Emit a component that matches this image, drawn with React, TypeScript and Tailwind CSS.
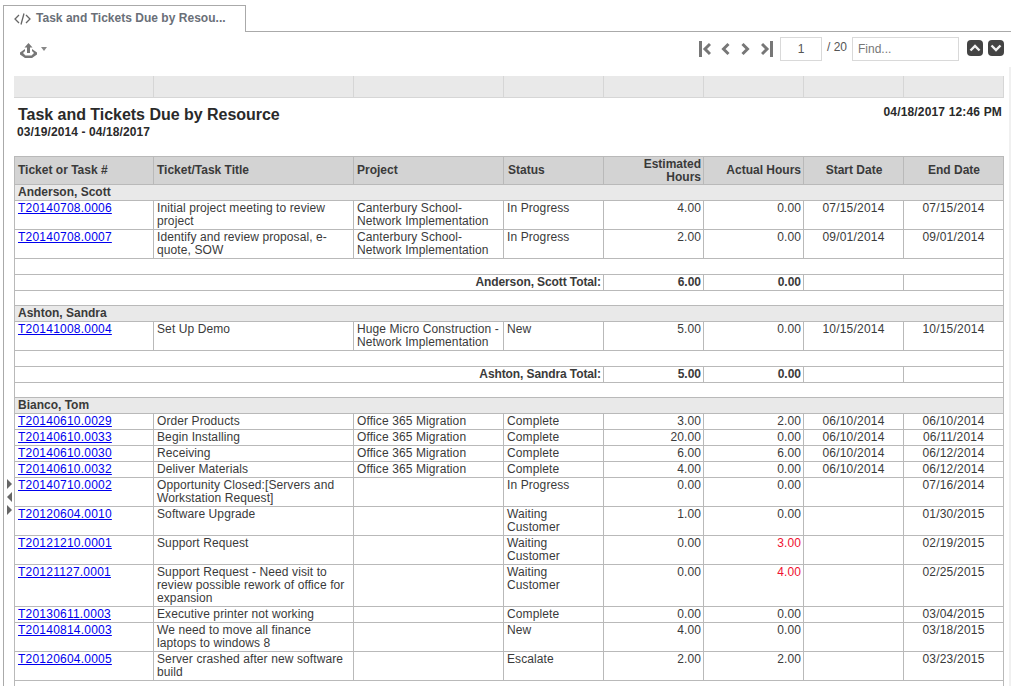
import React from "react";

const font = { fontFamily: '"Liberation Sans", Arial, sans-serif' };
type R = { id: string; title: string; project?: string; status: string; est: string; act: string; start?: string; end: string; h: string; red?: boolean };

const Colgroup = () => (
  <colgroup>
    <col className="w-[140px]" />
    <col className="w-[200px]" />
    <col className="w-[150px]" />
    <col className="w-[100px]" />
    <col className="w-[100px]" />
    <col className="w-[100px]" />
    <col className="w-[100px]" />
    <col className="w-[100px]" />
  </colgroup>
);

const td = "border-r border-b border-[#b9b9b9] align-top px-[2px] pt-[1px] pb-0";

function Row({ r }: { r: R }) {
  return (
    <tr className="tracking-[0.1px]">
      <td className={`${td} border-l pl-[3px] ${r.h}`}>
        <a href="#" className="text-[#0000ee] underline tracking-[0.22px]">{r.id}</a>
      </td>
      <td className={`${td} pl-[3px]`}>{r.title}</td>
      <td className={`${td} pl-[3px]`}>{r.project}</td>
      <td className={`${td} pl-[3px]`}>{r.status}</td>
      <td className={`${td} text-right`}>{r.est}</td>
      <td className={`${td} text-right ${r.red ? "text-[#f01030]" : ""}`}>{r.act}</td>
      <td className={`${td} text-center tracking-[0.2px]`}>{r.start}</td>
      <td className={`${td} text-center tracking-[0.2px]`}>{r.end}</td>
    </tr>
  );
}

function Group({ name }: { name: string }) {
  return (
    <tr>
      <td colSpan={8} className="h-[16px] bg-[#e9e9e9] border-l border-r border-b border-[#b9b9b9] pl-[3px] font-bold align-middle">{name}</td>
    </tr>
  );
}

function Blank({ h }: { h: string }) {
  return (
    <tr>
      <td colSpan={8} className={`${h} border-l border-r border-b border-[#b9b9b9]`} />
    </tr>
  );
}

function Total({ name, est, act }: { name: string; est: string; act: string }) {
  return (
    <tr className="font-bold">
      <td colSpan={4} className="h-[16px] border-l border-r border-b border-[#b9b9b9] text-right pr-[2px] tracking-[-0.1px]">{name}</td>
      <td className="border-r border-b border-[#b9b9b9] text-right pr-[2px]">{est}</td>
      <td className="border-r border-b border-[#b9b9b9] text-right pr-[2px]">{act}</td>
      <td className="border-r border-b border-[#b9b9b9]" />
      <td className="border-r border-b border-[#b9b9b9]" />
    </tr>
  );
}

const anderson: R[] = [
  { id: "T20140708.0006", title: "Initial project meeting to review project", project: "Canterbury School- Network Implementation", status: "In Progress", est: "4.00", act: "0.00", start: "07/15/2014", end: "07/15/2014", h: "h-[29px]" },
  { id: "T20140708.0007", title: "Identify and review proposal, e-quote, SOW", project: "Canterbury School- Network Implementation", status: "In Progress", est: "2.00", act: "0.00", start: "09/01/2014", end: "09/01/2014", h: "h-[29px]" },
];
const ashton: R[] = [
  { id: "T20141008.0004", title: "Set Up Demo", project: "Huge Micro Construction - Network Implementation", status: "New", est: "5.00", act: "0.00", start: "10/15/2014", end: "10/15/2014", h: "h-[29px]" },
];
const o365 = "Office 365 Migration";
const bianco: R[] = [
  { id: "T20140610.0029", title: "Order Products", project: o365, status: "Complete", est: "3.00", act: "2.00", start: "06/10/2014", end: "06/10/2014", h: "h-[16px]" },
  { id: "T20140610.0033", title: "Begin Installing", project: o365, status: "Complete", est: "20.00", act: "0.00", start: "06/10/2014", end: "06/11/2014", h: "h-[16px]" },
  { id: "T20140610.0030", title: "Receiving", project: o365, status: "Complete", est: "6.00", act: "6.00", start: "06/10/2014", end: "06/12/2014", h: "h-[16px]" },
  { id: "T20140610.0032", title: "Deliver Materials", project: o365, status: "Complete", est: "4.00", act: "0.00", start: "06/10/2014", end: "06/12/2014", h: "h-[16px]" },
  { id: "T20140710.0002", title: "Opportunity Closed:[Servers and Workstation Request]", status: "In Progress", est: "0.00", act: "0.00", end: "07/16/2014", h: "h-[29px]" },
  { id: "T20120604.0010", title: "Software Upgrade", status: "Waiting Customer", est: "1.00", act: "0.00", end: "01/30/2015", h: "h-[29px]" },
  { id: "T20121210.0001", title: "Support Request", status: "Waiting Customer", est: "0.00", act: "3.00", end: "02/19/2015", h: "h-[29px]", red: true },
  { id: "T20121127.0001", title: "Support Request - Need visit to review possible rework of office for expansion", status: "Waiting Customer", est: "0.00", act: "4.00", end: "02/25/2015", h: "h-[42px]", red: true },
  { id: "T20130611.0003", title: "Executive printer not working", status: "Complete", est: "0.00", act: "0.00", end: "03/04/2015", h: "h-[16px]" },
  { id: "T20140814.0003", title: "We need to move all finance laptops to windows 8", status: "New", est: "4.00", act: "0.00", end: "03/18/2015", h: "h-[29px]" },
  { id: "T20120604.0005", title: "Server crashed after new software build", status: "Escalate", est: "2.00", act: "2.00", end: "03/23/2015", h: "h-[29px]" },
];

const Chev = ({ d, w }: { d: string; w: number }) => (
  <svg width={w} height="16" viewBox={`0 0 ${w} 16`} fill="none" stroke="#777" strokeWidth="3"><path d={d} /></svg>
);

const th = "border-t border-r border-b border-[#b9b9b9] bg-[#d3d3d3] font-bold align-middle";

export default function App() {
  return (
    <div className="relative w-[1011px] h-[686px] overflow-hidden bg-white text-[12px] leading-[13px] text-[#3a3a3a]" style={font}>
      <div className="flex items-end h-[32px] pt-[5px]">
        <div className="ml-[3px] w-[243px] h-[27px] border-l border-t border-r border-[#aaaaaa] flex items-center pb-[1px] pl-[10px] gap-[5px] text-[#6a6f78] font-bold bg-white">
          <svg width="17" height="12" viewBox="0 0 17 12" fill="none" stroke="#666" strokeWidth="1.3">
            <path d="M5 2 L1 6 L5 10 M12 2 L16 6 L12 10 M10 0.5 L7 11.5" />
          </svg>
          <span className="tracking-[0.02px]">Task and Tickets Due by Resou...</span>
        </div>
        <div className="flex-1 border-b border-[#aaaaaa]" />
      </div>

      <div className="ml-[3px] border-l border-[#aaaaaa] h-[654px] pl-[10px]">
        <div className="h-[44px] flex items-start pt-[5px]">
          <div className="flex items-start gap-[4px] ml-[6px] mt-[6px]">
            <svg width="17" height="15" viewBox="0 0 17 15">
              <path d="M8.5 0 L12.5 4.5 L10 4.5 L10 10 L7 10 L7 4.5 L4.5 4.5 Z" fill="#777" />
              <path d="M5 6 L0 9.5 L0 11.5 L5 15 L12 15 L17 11.5 L17 9.5 L12 6 L12 8 L14 10 L11.5 12.5 L5.5 12.5 L3 10 L5 8 Z" fill="#777" />
            </svg>
            <div className="mt-[4px] w-0 h-0 border-l-[3px] border-r-[3px] border-t-[4px] border-l-transparent border-r-transparent border-t-[#888]" />
          </div>
          <div className="ml-auto flex items-start mr-[7px]">
            <div className="flex items-center mt-[4px] mr-[7px]">
              <Chev w={12} d="M1.5 0 L1.5 16 M11 3 L6 8 L11 13" />
              <div className="w-[9px]" />
              <Chev w={10} d="M8.5 3 L3.5 8 L8.5 13" />
              <div className="w-[11px]" />
              <Chev w={10} d="M1.5 3 L6.5 8 L1.5 13" />
              <div className="w-[10px]" />
              <Chev w={12} d="M1 3 L6 8 L1 13 M10.5 0 L10.5 16" />
            </div>
            <input readOnly value="1" className="w-[42px] h-[24px] border border-[#d9d9d9] text-center text-[12px] text-[#555] outline-none" style={font} />
            <span className="ml-[5px] mr-[5px] mt-[4px] w-[20px] text-[#555] whitespace-nowrap">/ 20</span>
            <input readOnly placeholder="Find..." className="w-[107px] h-[24px] border border-[#d9d9d9] pl-[5px] text-[12px] placeholder:text-[#777] outline-none" style={font} />
            <div className="ml-[8px] mt-[3px] w-[16px] h-[16px] rounded-[4px] bg-[#444444] flex items-center justify-center">
              <svg width="12" height="8" viewBox="0 0 12 8" fill="none" stroke="#f2f2f2" strokeWidth="2.4"><path d="M1.5 6.5 L6 2 L10.5 6.5" /></svg>
            </div>
            <div className="ml-[5px] mt-[3px] w-[16px] h-[16px] rounded-[4px] bg-[#444444] flex items-center justify-center">
              <svg width="12" height="8" viewBox="0 0 12 8" fill="none" stroke="#f2f2f2" strokeWidth="2.4"><path d="M1.5 1.5 L6 6 L10.5 1.5" /></svg>
            </div>
          </div>
        </div>

        <table className="table-fixed w-[990px] border-separate border-spacing-0">
          <Colgroup />
          <tbody>
            <tr>
              {[0, 1, 2, 3, 4, 5, 6, 7].map((i) => (
                <td key={i} className="h-[22px] bg-[#e9e9e9] border-r border-b border-[#d6d6d6]" />
              ))}
            </tr>
          </tbody>
        </table>

        <div className="h-[58px] w-[990px] flex justify-between pl-[3px] pr-[2px] pt-[8px] font-bold text-[#2a2a2a]">
          <div>
            <div className="text-[16px] leading-[18px] ml-[1px] -tracking-[0.03px]">Task and Tickets Due by Resource</div>
            <div className="leading-[14px] mt-[1px] tracking-[0.1px]">03/19/2014 - 04/18/2017</div>
          </div>
          <div className="tracking-[0.16px]">04/18/2017 12:46 PM</div>
        </div>

        <table className="table-fixed w-[990px] border-separate border-spacing-0">
          <Colgroup />
          <tbody>
            <tr>
              <td className={`${th} border-l h-[29px] pl-[3px]`}>Ticket or Task #</td>
              <td className={`${th} pl-[3px]`}>Ticket/Task Title</td>
              <td className={`${th} pl-[3px]`}>Project</td>
              <td className={`${th} pl-[4px]`}>Status</td>
              <td className={`${th} text-right pr-[2px]`}>Estimated<br />Hours</td>
              <td className={`${th} text-right pr-[2px]`}>Actual Hours</td>
              <td className={`${th} text-center pl-[1px]`}>Start Date</td>
              <td className={`${th} text-center pl-[1px]`}>End Date</td>
            </tr>
            <Group name="Anderson, Scott" />
            {anderson.map((r) => <Row key={r.id} r={r} />)}
            <Blank h="h-[16px]" />
            <Total name="Anderson, Scott Total:" est="6.00" act="0.00" />
            <Blank h="h-[15px]" />
            <Group name="Ashton, Sandra" />
            {ashton.map((r) => <Row key={r.id} r={r} />)}
            <Blank h="h-[16px]" />
            <Total name="Ashton, Sandra Total:" est="5.00" act="0.00" />
            <Blank h="h-[15px]" />
            <Group name="Bianco, Tom" />
            {bianco.map((r) => <Row key={r.id} r={r} />)}
            <Blank h="h-[16px]" />
          </tbody>
        </table>
      </div>

      <div className="absolute right-0 top-[67px] bottom-0 w-[2px] bg-[#f0f0f0]" />
      <div className="absolute left-[7px] top-[479px] flex flex-col gap-[3px]">
        <div className="w-0 h-0 border-y-[5px] border-l-[5px] border-y-transparent border-l-[#666]" />
        <div className="w-0 h-0 border-y-[5px] border-r-[5px] border-y-transparent border-r-[#666]" />
        <div className="w-0 h-0 border-y-[5px] border-l-[5px] border-y-transparent border-l-[#666]" />
      </div>
    </div>
  );
}
